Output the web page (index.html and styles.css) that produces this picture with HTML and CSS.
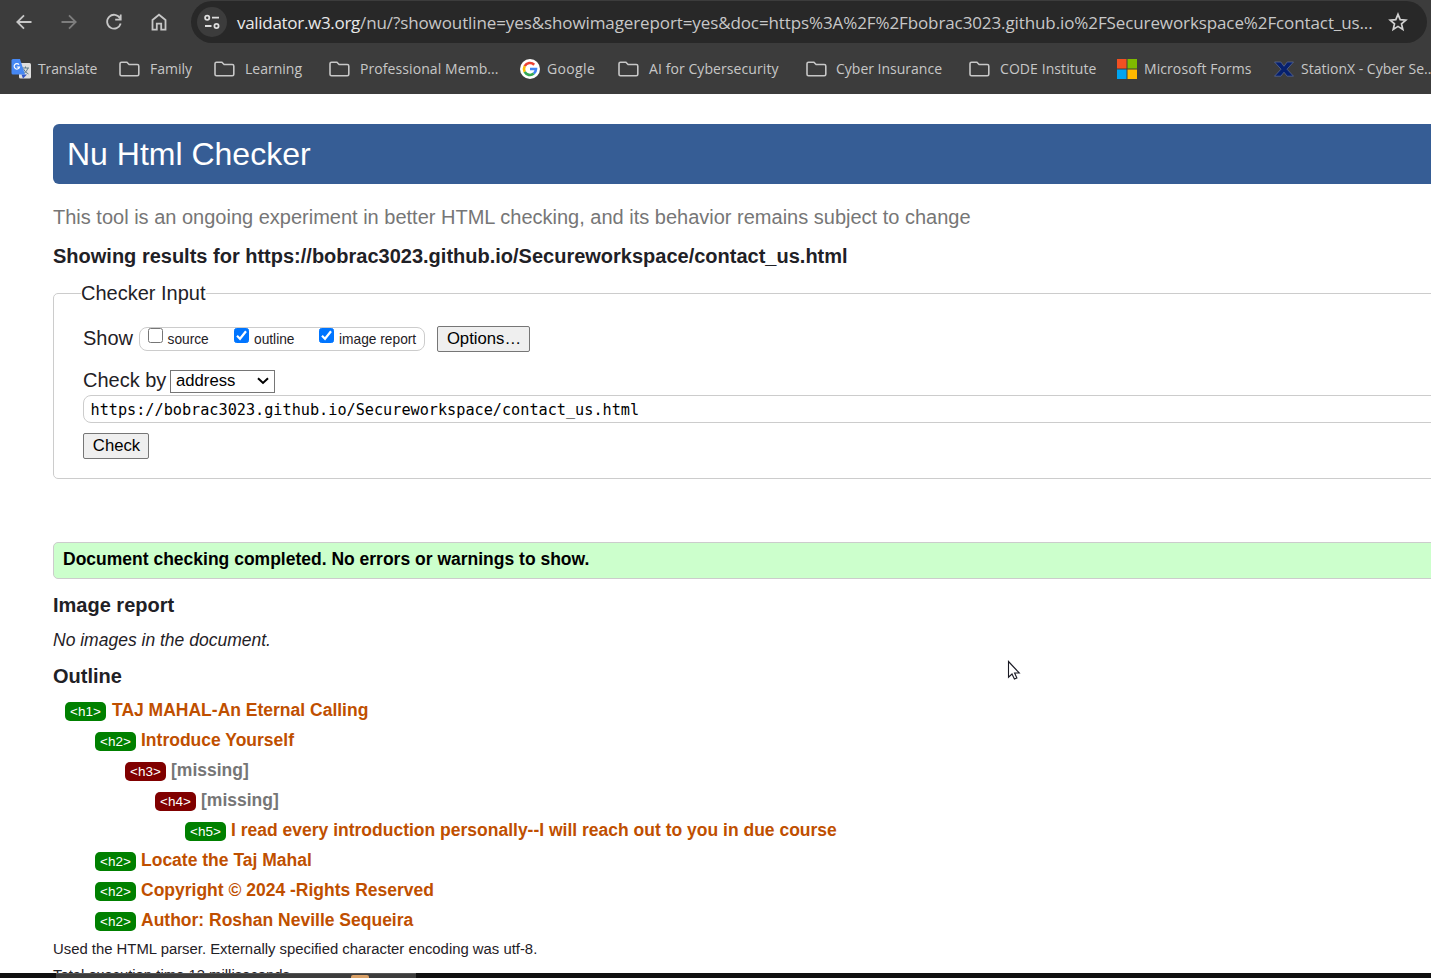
FILE: index.html
```html
<!DOCTYPE html>
<html lang="en">
<head>
<meta charset="utf-8">
<title>Nu Html Checker</title>
<link rel="stylesheet" href="styles.css">
</head>
<body>
<svg class="defs" width="0" height="0"><defs>
<symbol id="folder" viewBox="0 0 21 16"><path d="M2.500 1.200h5.400l2.200 2.300h8.200q1.500 0 1.500 1.500v8.300q0 1.500-1.500 1.500H2.500Q1 14.800 1 13.300V2.700q0-1.500 1.500-1.500z" fill="none" stroke="#c7c7c7" stroke-width="1.600"/></symbol>
</defs></svg>
<div class="window">
<div class="chrome">
  <div class="toolbar">
    <svg class="nav" viewBox="0 0 18 18"><path d="M16.500 9H2.500M9 2.300 2.300 9 9 15.700" /></svg>
    <svg class="nav dim" viewBox="0 0 18 18"><path d="M1.500 9H15.500M9 2.300 15.700 9 9 15.700" /></svg>
    <svg class="nav" viewBox="0 0 18 18"><path d="M15 5.200A6.900 6.900 0 1 0 15.700 10.500M15.700 1.500V6.700H10.200" /></svg>
    <svg class="nav" viewBox="0 0 18 18"><path d="M2.500 16.600V7L9 1.700 15.500 7V16.600H11.200V10.700H6.800V16.600z" /></svg>
    <div class="omnibox">
      <div class="site"><svg width="18" height="18" viewBox="0 0 18 18"><g fill="none" stroke="#dedede" stroke-width="1.800"><circle cx="4.200" cy="4.700" r="2.100"/><path d="M9 4.700h7M2 13h6.500"/><circle cx="13.500" cy="13" r="2.100"/></g></svg></div>
      <div class="url"><span class="host">validator.w3.org</span>/nu/?showoutline=yes&amp;showimagereport=yes&amp;doc=https%3A%2F%2Fbobrac3023.github.io%2FSecureworkspace%2Fcontact_us...</div>
      <svg class="star" viewBox="0 0 20 20"><path d="M10 2.300l2.200 5.300 5.600.5-4.300 3.700 1.300 5.600L10 14.400l-4.800 3 1.300-5.600-4.300-3.700 5.600-.5z" fill="none" stroke="#d2d2d2" stroke-width="1.700"/></svg>
    </div>
  </div>
  <div class="bookmarks">
    <div class="bm"><svg class="ico" viewBox="0 0 20 20"><rect x="8" y="4" width="12" height="15.500" rx="1.500" fill="#dedede"/><path d="M11 9h7M14.500 7.500V9M17 9q-1 4-5 6M12.500 10q1.500 3.500 5 5" stroke="#607d8b" fill="none"/><path d="M10.500 15.500h5.500l-4 4z" fill="#3155c6"/><path d="M2 0h7l5 15.500H2Q.5 15.500.5 14V1.500Q.5 0 2 0z" fill="#4688f4"/><path d="M8 5.700A2.700 2.700 0 1 0 8.500 8H5.800" stroke="#fff" stroke-width="1.200" fill="none"/></svg><span class="tight">Translate</span></div>
    <div class="bm"><svg class="fold"><use href="#folder"/></svg><span>Family</span></div>
    <div class="bm"><svg class="fold"><use href="#folder"/></svg><span>Learning</span></div>
    <div class="bm"><svg class="fold"><use href="#folder"/></svg><span class="wide">Professional Memb...</span></div>
    <div class="bm"><svg class="ico" viewBox="0 0 20 20"><circle cx="10" cy="10" r="10" fill="#fff"/><g fill="none" stroke-width="2.600"><path d="M14.200 5.700A6 6 0 0 0 4.700 7.200" stroke="#ea4335"/><path d="M4.700 7.200A6 6 0 0 0 4.700 12.800" stroke="#fbbc05"/><path d="M4.700 12.800A6 6 0 0 0 13.800 14.600" stroke="#34a853"/><path d="M13.800 14.600A6 6 0 0 0 16 10H10" stroke="#4285f4"/></g></svg><span class="wider">Google</span></div>
    <div class="bm"><svg class="fold"><use href="#folder"/></svg><span class="wide">AI for Cybersecurity</span></div>
    <div class="bm"><svg class="fold near"><use href="#folder"/></svg><span>Cyber Insurance</span></div>
    <div class="bm"><svg class="fold"><use href="#folder"/></svg><span class="wide">CODE Institute</span></div>
    <div class="bm"><svg class="ico" viewBox="0 0 20 20"><path d="M0 0h9.500v9.500H0z" fill="#f25022"/><path d="M10.500 0H20v9.500h-9.500z" fill="#7fba00"/><path d="M0 10.500h9.500V20H0z" fill="#00a4ef"/><path d="M10.500 10.500H20V20h-9.500z" fill="#ffb900"/></svg><span class="wide">Microsoft Forms</span></div>
    <div class="bm"><svg class="ico" viewBox="0 0 20 20"><path d="M.5 3h6.300L10 7.300 13.200 3h6.300L13 10.200l6.500 7h-6.300L10 13.200l-3.200 4H.5l6.500-7z" fill="#06206e" stroke="#62709a" stroke-width=".7"/></svg><span>StationX - Cyber Se...</span></div>
  </div>
</div>
<main class="page">
  <h1 class="banner"><span>Nu Html Checker</span></h1>
  <p class="tagline">This tool is an ongoing experiment in better HTML checking, and its behavior remains subject to change</p>
  <h2 class="results">Showing results for https://bobrac3023.github.io/Secureworkspace/contact_us.html</h2>
  <fieldset class="input">
    <legend>Checker Input</legend>
    <div class="show-row"><span class="label">Show</span>
      <div class="checks">
        <label><i class="box"></i><span>source</span></label>
        <label><i class="box on"><svg viewBox="0 0 15 15"><path d="M3 7.800l3 3 6-7.600"/></svg></i><span>outline</span></label>
        <label><i class="box on"><svg viewBox="0 0 15 15"><path d="M3 7.800l3 3 6-7.600"/></svg></i><span>image report</span></label>
      </div>
      <button class="btn options">Options…</button>
    </div>
    <div class="by-row"><span class="label">Check by</span><div class="select"><span>address</span><svg viewBox="0 0 12 8"><path d="M1 1.300l5 4.700 5-4.700" fill="none" stroke="#000" stroke-width="2"/></svg></div></div>
    <div class="address">https://bobrac3023.github.io/Secureworkspace/contact_us.html</div>
    <button class="btn check">Check</button>
  </fieldset>
  <p class="success">Document checking completed. No errors or warnings to show.</p>
  <h2 class="sec">Image report</h2>
  <p class="noimg">No images in the document.</p>
  <h2 class="sec">Outline</h2>
  <ul class="outline">
    <li class="l1"><b>&lt;h1&gt;</b><span>TAJ MAHAL-An Eternal Calling</span></li>
    <li class="l2"><b>&lt;h2&gt;</b><span>Introduce Yourself</span></li>
    <li class="l3 missing"><b>&lt;h3&gt;</b><span>[missing]</span></li>
    <li class="l4 missing"><b>&lt;h4&gt;</b><span>[missing]</span></li>
    <li class="l5"><b>&lt;h5&gt;</b><span>I read every introduction personally--I will reach out to you in due course</span></li>
    <li class="l2"><b>&lt;h2&gt;</b><span>Locate the Taj Mahal</span></li>
    <li class="l2"><b>&lt;h2&gt;</b><span>Copyright © 2024 -Rights Reserved</span></li>
    <li class="l2"><b>&lt;h2&gt;</b><span>Author: Roshan Neville Sequeira</span></li>
  </ul>
  <p class="detail">Used the HTML parser. Externally specified character encoding was utf-8.</p>
  <p class="detail">Total execution time 13 milliseconds.</p>
</main>
<div class="taskbar"><div class="search"><i></i></div></div>
<svg class="cursor" viewBox="0 0 14 21"><path d="M1.500 1.500V17.200L5 14l2.400 5 2.500-1.100L7.600 13H12.300z" fill="#fff" stroke="#1a1a24" stroke-width="1.100"/></svg>
</div>
</body>
</html>
```
FILE: styles.css
```css
* { box-sizing: border-box; }
body { margin: 0; background: #fff; font-family: "Liberation Sans", Arial, sans-serif; color: #1f2126; }
h1, h2, p, ul { margin: 0; padding: 0; }
.defs { display: block; }
.window { position: relative; width: 1431px; height: 978px; overflow: hidden; display: flex; flex-direction: column; }
.chrome { height: 94px; flex: none; background: #3c3c3c; font-family: "Open Sans", "Noto Sans", sans-serif; color: #c7c7c7; }
.toolbar { height: 44px; display: flex; align-items: center; padding: 0 4px 0 15px; }
.nav { width: 18px; height: 18px; margin-right: 27px; flex: none; fill: none; stroke: #c7c7c7; stroke-width: 1.8; }
.nav.dim { stroke: #7d7d7d; }
.omnibox { flex: 1; height: 42px; border-radius: 21px; background: #282828; display: flex; align-items: center; padding: 0 19px 0 6px; }
.nav + .omnibox { margin: 0 0 0 -4px; }
.site { width: 30px; height: 30px; border-radius: 50%; background: #3c3c3c; display: flex; align-items: center; justify-content: center; flex: none; }
.url { margin-left: 10px; font-size: 17px; letter-spacing: -0.105px; white-space: nowrap; flex: 1; width: 0; }
.host { color: #e8e8e8; letter-spacing: -0.3px; }
.star { width: 20px; height: 20px; flex: none; }
.bookmarks { height: 50px; padding-left: 11px; display: grid; grid-template-columns: 108px 95px 115px 191px 98px 188px 163px 148px 157px 157px; align-items: center; font-size: 14px; white-space: nowrap; }
.bm { display: flex; align-items: center; }
.bm span { margin-top: -2px; }
.tight { letter-spacing: -0.15px; }
.wide { letter-spacing: 0.08px; }
.wider { letter-spacing: 0.35px; }
.ico { width: 20px; height: 20px; margin-right: 7px; flex: none; }
.fold { width: 21px; height: 16px; margin-right: 10px; flex: none; }
.fold.near { margin-right: 9px; }
.page { padding: 30px 0 0 53px; width: 1500px; flex: 1; min-height: 0; overflow: hidden; }
.banner { height: 60px; padding-left: 14px; background: #365d95; border-radius: 6px; color: #fff; font-size: 32px; font-weight: 400; line-height: 60px; }
.tagline { margin-top: 21px; font-size: 20px; line-height: 24px; color: #767676; white-space: nowrap; }
.results { margin-top: 15px; font-size: 20px; line-height: 24px; white-space: nowrap; }
.input { margin: 13px 0 0; height: 198px; padding: 0 0 0 29px; border: 1px solid #ccc; border-radius: 5px; min-width: 0; }
.input legend { margin-left: -2px; padding: 0; font-size: 20px; line-height: 24px; }
.label { font-size: 20px; line-height: 24px; padding-bottom: 3px; }
.show-row { display: flex; align-items: center; height: 26px; margin-top: 21px; }
.show-row .label { width: 56px; }
.checks { width: 286px; height: 24px; border: 1px solid #ccc; border-radius: 8px; display: grid; grid-template-columns: 86.500px 85px 1fr; padding-left: 7.500px; font-size: 13.750px; }
.checks label { display: flex; gap: 5px; line-height: 23px; white-space: nowrap; }
.box { width: 15px; height: 15px; border: 1px solid #767676; border-radius: 2.500px; background: #fff; flex: none; }
.box.on { background: #0075ff; border-color: #0075ff; }
.box svg { display: block; width: 15px; height: 15px; margin: -1px; fill: none; stroke: #fff; stroke-width: 2.200; }
.btn { display: block; font: 16.700px "Liberation Sans", Arial, sans-serif; color: #000; background: #efefef; border: 1px solid #767676; border-radius: 2px; height: 26px; padding: 0 0 0 1px; line-height: 24px; }
.options { width: 93px; margin-left: 12px; }
.check { width: 66px; margin-top: 10px; }
.by-row { display: flex; align-items: center; height: 26px; margin-top: 16px; }
.by-row .label { width: 87px; }
.select { width: 105px; height: 23px; border: 1px solid #767676; display: flex; align-items: center; justify-content: space-between; padding: 0 5px; font-size: 16.700px; color: #000; }
.select svg { width: 12px; height: 8px; }
.address { height: 28px; margin-top: 1px; border: 1px solid #ccc; border-radius: 8px; padding-left: 6.500px; font: 15.200px/28px "DejaVu Sans Mono", monospace; color: #000; }
.success { margin-top: 63px; height: 37px; border: 1px solid #ccc; border-radius: 5px; background: #cfc; padding-left: 9px; color: #000; font-size: 17.500px; font-weight: 700; line-height: 33px; }
.sec { margin-top: 14px; font-size: 20px; line-height: 24px; }
.noimg { margin-top: 11px; font-size: 17.500px; font-style: italic; line-height: 24px; margin-bottom: -2px; }
.outline { list-style: none; margin-top: 7px; }
.outline li { height: 30px; display: flex; font-size: 17.500px; line-height: 30px; font-weight: 700; color: #bf4f00; white-space: nowrap; }
.outline b { width: 41px; height: 19px; margin: 7px 5px 0 0; border-radius: 5px; background: #008000; color: #fff; font-size: 13.500px; font-weight: 400; line-height: 19px; text-align: center; }
.outline .l1 b { margin-right: 6px; }
.outline .missing { color: #767676; }
.outline .missing b { background: #800000; }
.l1 { margin-left: 12px; }
.l2 { margin-left: 42px; }
.l3 { margin-left: 72px; }
.l4 { margin-left: 102px; }
.l5 { margin-left: 132px; }
.detail { font-size: 14.860px; line-height: 26px; white-space: nowrap; }
.outline + .detail { padding-top: 1px; }
.taskbar { height: 5px; flex: none; background: #101010; padding-left: 56px; }
.search { width: 360px; height: 5px; background: #3c3c3c; border-top: 1px solid #555; padding-left: 295px; }
.search i { display: block; width: 18px; height: 3px; margin-top: 1px; background: #d9a066; border-radius: 2px 2px 0 0; }
.cursor { position: absolute; left: 1007px; top: 660px; width: 14px; height: 21px; }
```
